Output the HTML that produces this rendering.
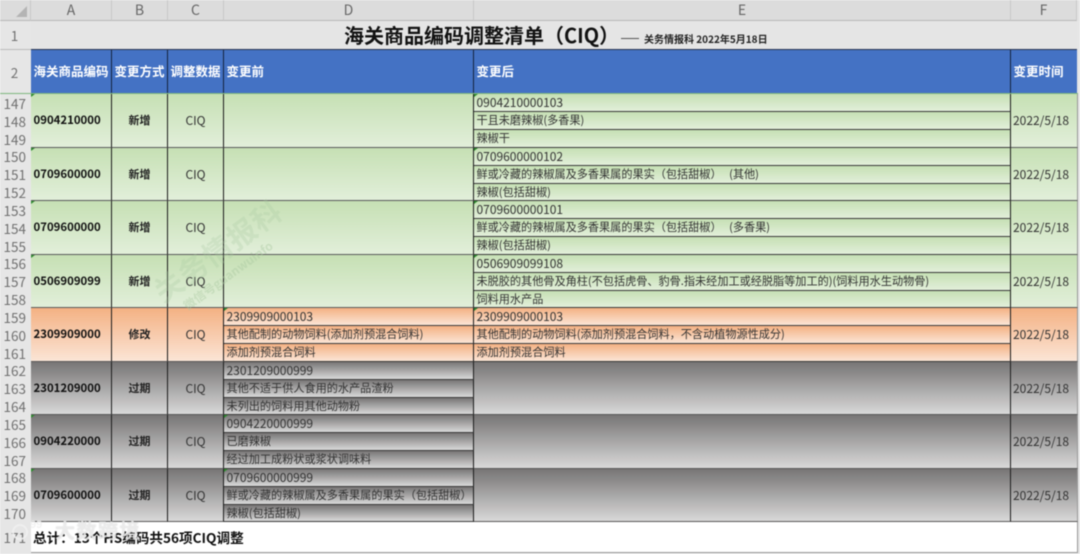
<!DOCTYPE html>
<html lang="zh"><head><meta charset="utf-8"><style>
html,body{margin:0;padding:0;background:#fff}
#p{position:relative;width:1080px;height:554px;overflow:hidden;background:#e6e6e6;font-family:"Noto Sans CJK SC",sans-serif;filter:blur(.45px)}
#p div{position:absolute;box-sizing:border-box;white-space:nowrap}
.ch{top:0;height:21px;background:#dcdcdc;border-right:1px solid #c8c8c8;border-bottom:1px solid #b8b8b8;color:#666;font:14px/20px "Noto Sans CJK SC",sans-serif;text-align:center}
.rn{left:0;width:31px;height:18px;color:#707070;font:13.5px/18px "Noto Sans CJK SC",sans-serif;text-align:right;padding-right:5px}
.hd{top:50px;height:44px;background:#4472c4;color:#fff;font:bold 12.5px/42px "Noto Sans CJK SC",sans-serif;padding-left:2.5px;border-right:1px solid #14233f}
.b{height:54px;border-bottom:1px solid #5a5a5a;border-right:1px solid #1c1c1c;color:#222}
.g{background:linear-gradient(#c6e0b4,#e2efda)}
.o{background:linear-gradient(#f4b183,#fbe5d6)}
.y{background:linear-gradient(#777575,#d9d9d9)}
.a{left:31px;width:81px;font:bold 11.4px/53px "Noto Sans CJK SC",sans-serif;padding-left:2.5px;color:#111}
.m{left:112px;width:56px;text-align:center;font:bold 11px/53px "Noto Sans CJK SC",sans-serif}
.c{left:168px;width:56px;text-align:center;font:12px/53px "Noto Sans CJK SC",sans-serif;color:#333}
.d{left:224px;width:250px}
.e{left:474px;width:537px}
.f{left:1011px;width:67px;font:12px/53px "Noto Sans CJK SC",sans-serif;padding-left:2px;border-right:1px solid #999;color:#333}
.s{height:18px;border-bottom:1px solid #3a3a3a;border-right:1px solid #1c1c1c;font:11.15px/17px "Noto Sans CJK SC",sans-serif;padding-left:2.5px;color:#333}
.s.n{font-size:12px}
.t{width:4px;height:3px;background:#2e8b2e;clip-path:polygon(0 0,100% 0,0 100%)}
</style></head><body><div id="p">

<div class="ch" style="left:0;width:31px"></div>
<div style="left:16px;top:6px;width:11px;height:11px;background:#b4b4b4;clip-path:polygon(100% 0,100% 100%,0 100%)"></div>
<div class="ch" style="left:31px;width:81px">A</div>
<div class="ch" style="left:112px;width:56px">B</div>
<div class="ch" style="left:168px;width:56px">C</div>
<div class="ch" style="left:224px;width:250px">D</div>
<div class="ch" style="left:474px;width:537px">E</div>
<div class="ch" style="left:1011px;width:66px">F</div>
<div style="left:1077px;top:0;width:3px;height:21px;background:#e4e4e4"></div>

<div class="rn" style="top:26px;text-align:center;padding:0 2px 0 0">1</div>
<div class="rn" style="top:63px;text-align:center;padding:0 2px 0 0">2</div>
<div style="left:0;top:49px;width:31px;height:1px;background:#bbb"></div>

<div style="left:31px;top:21px;width:1046px;height:29px;background:#e5e5e5;border-bottom:1px solid #2a3550"></div>
<div style="left:344px;top:20px;font:bold 20px/29px 'Noto Sans CJK SC',sans-serif;color:#111">海关商品编码调整清单（CIQ）</div>
<div style="left:621px;top:38px;width:18px;height:1px;background:#555"></div>
<div style="left:644px;top:31px;font:bold 10px/16px 'Noto Sans CJK SC',sans-serif;color:#222">关务情报科 2022年5月18日</div>

<div class="hd" style="left:31px;width:81px">海关商品编码</div>
<div class="hd" style="left:112px;width:56px">变更方式</div>
<div class="hd" style="left:168px;width:56px">调整数据</div>
<div class="hd" style="left:224px;width:250px">变更前</div>
<div class="hd" style="left:474px;width:537px">变更后</div>
<div class="hd" style="left:1011px;width:66px;border-right:0">变更时间</div>
<div style="left:0;top:93px;width:1078px;height:1px;background:#7fb77f"></div>

<div class="rn" style="top:94px">147</div><div class="rn" style="top:112px">148</div><div class="rn" style="top:130px">149</div>
<div class="rn" style="top:147px">150</div><div class="rn" style="top:165px">151</div><div class="rn" style="top:183px">152</div>
<div class="rn" style="top:201px">153</div><div class="rn" style="top:219px">154</div><div class="rn" style="top:237px">155</div>
<div class="rn" style="top:254px">156</div><div class="rn" style="top:272px">157</div><div class="rn" style="top:290px">158</div>
<div class="rn" style="top:308px">159</div><div class="rn" style="top:326px">160</div><div class="rn" style="top:344px">161</div>
<div class="rn" style="top:361px">162</div><div class="rn" style="top:379px">163</div><div class="rn" style="top:397px">164</div>
<div class="rn" style="top:415px">165</div><div class="rn" style="top:433px">166</div><div class="rn" style="top:451px">167</div>
<div class="rn" style="top:468px">168</div><div class="rn" style="top:486px">169</div><div class="rn" style="top:504px">170</div>
<div class="rn" style="top:528px">171</div>

<!-- block 1 -->
<div class="b g a" style="top:94px">0904210000</div><div class="b g m" style="top:94px">新增</div><div class="b g c" style="top:94px">CIQ</div><div class="b g d" style="top:94px"></div><div class="b g f" style="top:94px">2022/5/18</div>
<div class="s g e n" style="top:94px">0904210000103</div><div class="s g e" style="top:112px">干且未磨辣椒(多香果)</div><div class="s g e" style="top:130px">辣椒干</div>
<!-- block 2 -->
<div class="b g a" style="top:148px;height:53px">0709600000</div><div class="b g m" style="top:148px;height:53px">新增</div><div class="b g c" style="top:148px;height:53px">CIQ</div><div class="b g d" style="top:148px;height:53px"></div><div class="b g f" style="top:148px;height:53px">2022/5/18</div>
<div class="s g e n" style="top:148px">0709600000102</div><div class="s g e" style="top:166px">鲜或冷藏的辣椒属及多香果属的果实（包括甜椒）&nbsp;&nbsp;&nbsp;(其他)</div><div class="s g e" style="top:184px;height:17px">辣椒(包括甜椒)</div>
<!-- block 3 -->
<div class="b g a" style="top:201px">0709600000</div><div class="b g m" style="top:201px">新增</div><div class="b g c" style="top:201px">CIQ</div><div class="b g d" style="top:201px"></div><div class="b g f" style="top:201px">2022/5/18</div>
<div class="s g e n" style="top:201px">0709600000101</div><div class="s g e" style="top:219px">鲜或冷藏的辣椒属及多香果属的果实（包括甜椒）&nbsp;&nbsp;&nbsp;(多香果)</div><div class="s g e" style="top:237px">辣椒(包括甜椒)</div>
<!-- block 4 -->
<div class="b g a" style="top:255px;height:53px">0506909099</div><div class="b g m" style="top:255px;height:53px">新增</div><div class="b g c" style="top:255px;height:53px">CIQ</div><div class="b g d" style="top:255px;height:53px"></div><div class="b g f" style="top:255px;height:53px">2022/5/18</div>
<div class="s g e n" style="top:255px">0506909099108</div><div class="s g e" style="top:273px">未脱胶的其他骨及角柱(不包括虎骨、豹骨.指未经加工或经脱脂等加工的)(饲料用水生动物骨)</div><div class="s g e" style="top:291px;height:17px">饲料用水产品</div>
<!-- block 5 -->
<div class="b o a" style="top:308px">2309909000</div><div class="b o m" style="top:308px">修改</div><div class="b o c" style="top:308px">CIQ</div><div class="b o f" style="top:308px">2022/5/18</div>
<div class="s o d n" style="top:308px">2309909000103</div><div class="s o d" style="top:326px">其他配制的动物饲料(添加剂预混合饲料)</div><div class="s o d" style="top:344px">添加剂预混合饲料</div>
<div class="s o e n" style="top:308px">2309909000103</div><div class="s o e" style="top:326px">其他配制的动物饲料(添加剂预混合饲料，不含动植物源性成分)</div><div class="s o e" style="top:344px">添加剂预混合饲料</div>
<!-- block 6 -->
<div class="b y a" style="top:362px;height:53px">2301209000</div><div class="b y m" style="top:362px;height:53px">过期</div><div class="b y c" style="top:362px;height:53px">CIQ</div><div class="b y e" style="top:362px;height:53px"></div><div class="b y f" style="top:362px;height:53px">2022/5/18</div>
<div class="s y d n" style="top:362px">2301209000999</div><div class="s y d" style="top:380px">其他不适于供人食用的水产品渣粉</div><div class="s y d" style="top:398px;height:17px">未列出的饲料用其他动物粉</div>
<!-- block 7 -->
<div class="b y a" style="top:415px">0904220000</div><div class="b y m" style="top:415px">过期</div><div class="b y c" style="top:415px">CIQ</div><div class="b y e" style="top:415px"></div><div class="b y f" style="top:415px">2022/5/18</div>
<div class="s y d n" style="top:415px">0904220000999</div><div class="s y d" style="top:433px">已磨辣椒</div><div class="s y d" style="top:451px">经过加工成粉状或浆状调味料</div>
<!-- block 8 -->
<div class="b y a" style="top:469px;height:53px">0709600000</div><div class="b y m" style="top:469px;height:53px">过期</div><div class="b y c" style="top:469px;height:53px">CIQ</div><div class="b y e" style="top:469px;height:53px"></div><div class="b y f" style="top:469px;height:53px">2022/5/18</div>
<div class="s y d n" style="top:469px">0709600000999</div><div class="s y d" style="top:487px">鲜或冷藏的辣椒属及多香果属的果实（包括甜椒）</div><div class="s y d" style="top:505px;height:17px">辣椒(包括甜椒)</div>

<div class="t" style="left:31px;top:94px"></div><div class="t" style="left:31px;top:148px"></div><div class="t" style="left:31px;top:201px"></div><div class="t" style="left:31px;top:255px"></div><div class="t" style="left:31px;top:415px"></div><div class="t" style="left:31px;top:469px"></div>
<div class="t" style="left:474px;top:94px"></div><div class="t" style="left:474px;top:148px"></div><div class="t" style="left:474px;top:201px"></div><div class="t" style="left:474px;top:255px"></div><div class="t" style="left:474px;top:308px"></div>
<div class="t" style="left:224px;top:308px"></div><div class="t" style="left:224px;top:415px"></div><div class="t" style="left:224px;top:469px"></div>

<!-- watermark -->
<div style="left:142px;top:233px;font:bold 29px/34px 'Noto Sans CJK SC',sans-serif;color:rgba(170,200,160,.28);transform:rotate(-36deg);letter-spacing:1px">关务情报科</div>
<div style="left:175px;top:268px;font:bold 12px/16px 'Noto Sans CJK SC',sans-serif;color:rgba(170,200,160,.42);transform:rotate(-36deg)">微信号guanwuinfo</div>

<!-- total row -->
<div style="left:31px;top:522px;width:1047px;height:31px;background:#fff;border-bottom:1px solid #999;border-right:1px solid #999"></div>
<div style="left:33px;top:527px;font:bold 13.6px/20px 'Noto Sans CJK SC',sans-serif;color:#111">总计：13个HS编码共56项CIQ调整</div>
<div style="left:55px;top:518px;font:bold 20px/24px 'Noto Sans CJK SC',sans-serif;color:rgba(240,240,240,.8);letter-spacing:1.5px;text-shadow:0 0 1px rgba(150,150,150,.4)">大数跨境</div>
<div style="left:12px;top:524px;width:16px;height:16px;border:2px solid rgba(240,240,240,.85);border-radius:50%"></div>
<div style="left:30px;top:518px;font:bold 11px/14px 'Liberation Sans',sans-serif;color:rgba(240,240,240,.85)">99</div>
</div></body></html>
